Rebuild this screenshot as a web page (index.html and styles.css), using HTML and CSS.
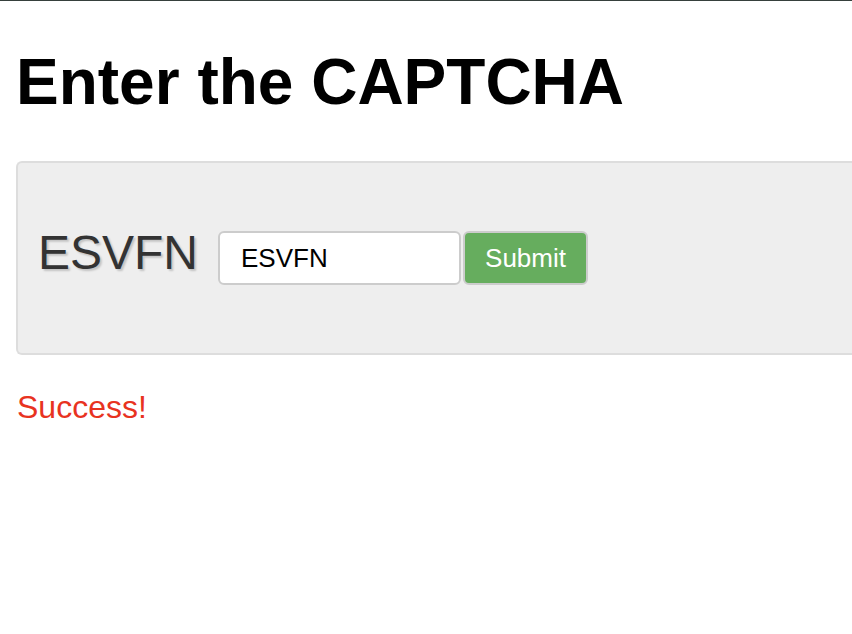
FILE: index.html
```html
<!DOCTYPE html>
<html lang="en">
<head>
<meta charset="utf-8">
<title>Enter the CAPTCHA</title>
<link rel="stylesheet" href="styles.css">
</head>
<body>
<h1 class="title">Enter the CAPTCHA</h1>
<form class="captcha-box">
  <span class="captcha-code">ESVFN</span>
  <input class="captcha-input" type="text" value="ESVFN">
  <button class="submit-btn" type="button">Submit</button>
</form>
<p class="message">Success!</p>
</body>
</html>
```
FILE: styles.css
```css
html {
  overflow: hidden;
}
body {
  margin: 0;
  padding: 0 16px;
  border-top: 1px solid #36403c;
  font-family: "Liberation Sans", Arial, sans-serif;
  color: #000;
  background: #fff;
  overflow: hidden;
}
.title {
  margin: 44px 0 0 0;
  font-size: 64px;
  font-weight: bold;
  line-height: 74px;
}
.captcha-box {
  box-sizing: border-box;
  width: 860px;
  height: 194px;
  margin: 42px 0 0 0;
  padding: 0 0 0 20px;
  display: flex;
  align-items: center;
  background: #eeeeee;
  border: 2px solid #dddddd;
  border-right: none;
  border-radius: 6px 0 0 6px;
}
.captcha-code {
  font-size: 48px;
  line-height: 54px;
  color: #333333;
  text-shadow: 2px 2px 2px rgba(0, 0, 0, 0.18);
  margin: 0 20px 0 0;
  padding-bottom: 10px;
}
.captcha-input {
  box-sizing: border-box;
  width: 243px;
  height: 54px;
  margin: 0;
  padding: 0 0 0 21px;
  font-family: "Liberation Sans", Arial, sans-serif;
  font-size: 26px;
  color: #000;
  background: #fff;
  border: 2px solid #cccccc;
  border-radius: 6px;
  outline: none;
}
.submit-btn {
  box-sizing: border-box;
  width: 125px;
  height: 54px;
  margin: 0 0 0 2px;
  padding: 0;
  font-family: "Liberation Sans", Arial, sans-serif;
  font-size: 26px;
  color: #ffffff;
  background: #66ad5e;
  border: 2px solid #cccccc;
  border-radius: 6px;
}
.message {
  margin: 34px 0 0 1px;
  font-size: 32px;
  line-height: 37px;
  color: #e8331f;
}
```
